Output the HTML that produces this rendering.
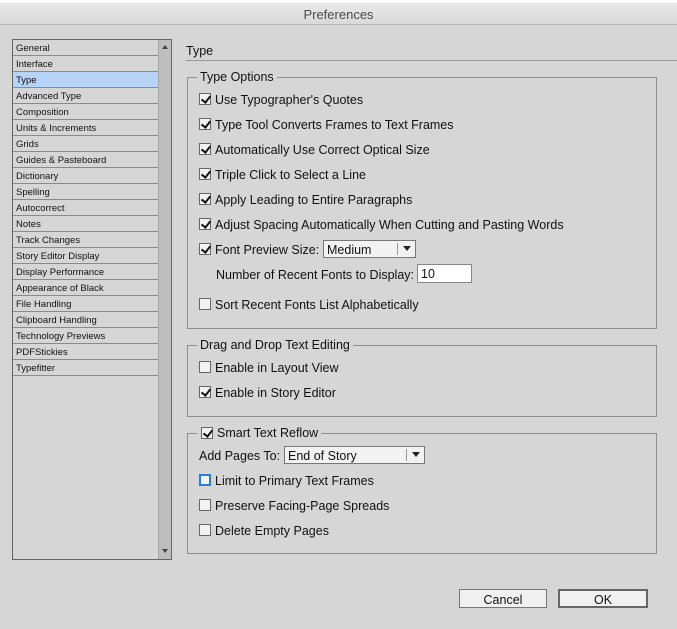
<!DOCTYPE html>
<html><head><style>
*{margin:0;padding:0;box-sizing:border-box}
body{width:677px;height:629px;background:#d6d6d6;font-family:"Liberation Sans",sans-serif;color:#111;position:relative;overflow:hidden}
.title{position:absolute;left:0;top:0;width:677px;height:25px;background:linear-gradient(#ececec,#d9d9d9);border-bottom:1px solid #b5b5b5;text-align:center;font-size:13px;line-height:29px;color:#4a4a4a}
.title:before{content:"";position:absolute;left:0;right:0;top:0;height:3px;background:#fff}
.list{position:absolute;left:12px;top:39px;width:160px;height:521px;border:1px solid #666;background:#d6d6d6}
.sb{position:absolute;right:0;top:0;width:13px;height:100%;background:#bdbdbd;border-left:1px solid #a8a8a8}
.item{position:absolute;left:0;width:145px;height:16px;border-bottom:1px solid #8a8a8a;font-size:9.5px;line-height:17px;padding-left:3px}
.sel{background:#b8d3f8}
.abs{position:absolute}
.t{font-size:12.5px;white-space:nowrap;padding-top:1px}
.grp{position:absolute;border:1px solid #8e8e8e}
.leg{position:absolute;background:#d6d6d6;padding:0 3px;font-size:12.5px;top:-8px;left:9px;line-height:15px}
.cb{position:absolute;width:12px;height:12px;border:1px solid #666;background:#f2f2f2}
.cb.c:after{content:"";position:absolute;left:3px;top:0px;width:4px;height:7px;border:solid #111;border-width:0 2px 2px 0;transform:rotate(38deg)}
.btn{position:absolute;height:19px;border:1px solid #777;background:#f0f0f0;font-size:12.5px;text-align:center;line-height:20px}
.dd{position:absolute;height:18px;border:1px solid #777;background:#f2f2f2;font-size:12.5px;line-height:18px;padding-left:3px}
.dd i{position:absolute;right:0;top:2px;width:18px;height:12px;border-left:1px solid #999}
.dd i:after{content:"";position:absolute;left:5px;top:3px;border:4px solid transparent;border-top:5px solid #222;border-bottom:0}
</style></head><body>
<div class="title">Preferences</div>
<div class="list">
<div class="sb"><div class="abs" style="left:3px;top:5px;border:3.5px solid transparent;border-bottom:4px solid #444;border-top:0"></div><div class="abs" style="left:3px;bottom:6px;border:3.5px solid transparent;border-top:4px solid #444;border-bottom:0"></div></div>
<div class="item" style="top:0">General</div>
<div class="item" style="top:16px">Interface</div>
<div class="item sel" style="top:32px">Type</div>
<div class="item" style="top:48px">Advanced Type</div>
<div class="item" style="top:64px">Composition</div>
<div class="item" style="top:80px">Units &amp; Increments</div>
<div class="item" style="top:96px">Grids</div>
<div class="item" style="top:112px">Guides &amp; Pasteboard</div>
<div class="item" style="top:128px">Dictionary</div>
<div class="item" style="top:144px">Spelling</div>
<div class="item" style="top:160px">Autocorrect</div>
<div class="item" style="top:176px">Notes</div>
<div class="item" style="top:192px">Track Changes</div>
<div class="item" style="top:208px">Story Editor Display</div>
<div class="item" style="top:224px">Display Performance</div>
<div class="item" style="top:240px">Appearance of Black</div>
<div class="item" style="top:256px">File Handling</div>
<div class="item" style="top:272px">Clipboard Handling</div>
<div class="item" style="top:288px">Technology Previews</div>
<div class="item" style="top:304px">PDFStickies</div>
<div class="item" style="top:320px">Typefitter</div>
</div>
<div class="abs t" style="left:186px;top:43px">Type</div>
<div class="abs" style="left:186px;top:60px;width:491px;height:1px;background:#999"></div>

<div class="grp" style="left:187px;top:77px;width:470px;height:252px"><div class="leg">Type Options</div></div>
<div class="cb c" style="left:199px;top:93px"></div><div class="abs t" style="left:215px;top:92px">Use Typographer's Quotes</div>
<div class="cb c" style="left:199px;top:118px"></div><div class="abs t" style="left:215px;top:117px">Type Tool Converts Frames to Text Frames</div>
<div class="cb c" style="left:199px;top:143px"></div><div class="abs t" style="left:215px;top:142px">Automatically Use Correct Optical Size</div>
<div class="cb c" style="left:199px;top:168px"></div><div class="abs t" style="left:215px;top:167px">Triple Click to Select a Line</div>
<div class="cb c" style="left:199px;top:193px"></div><div class="abs t" style="left:215px;top:192px">Apply Leading to Entire Paragraphs</div>
<div class="cb c" style="left:199px;top:218px"></div><div class="abs t" style="left:215px;top:217px">Adjust Spacing Automatically When Cutting and Pasting Words</div>
<div class="cb c" style="left:199px;top:243px"></div><div class="abs t" style="left:215px;top:242px">Font Preview Size:</div>
<div class="dd" style="left:323px;top:240px;width:93px">Medium<i></i></div>
<div class="abs t" style="left:216px;top:267px">Number of Recent Fonts to Display:</div>
<div class="abs" style="left:417px;top:264px;width:55px;height:19px;border:1px solid #888;background:#fff;font-size:12.5px;line-height:19px;padding-left:3px">10</div>
<div class="cb" style="left:199px;top:298px"></div><div class="abs t" style="left:215px;top:297px">Sort Recent Fonts List Alphabetically</div>

<div class="grp" style="left:187px;top:345px;width:470px;height:72px"><div class="leg">Drag and Drop Text Editing</div></div>
<div class="cb" style="left:199px;top:361px"></div><div class="abs t" style="left:215px;top:360px">Enable in Layout View</div>
<div class="cb c" style="left:199px;top:386px"></div><div class="abs t" style="left:215px;top:385px">Enable in Story Editor</div>

<div class="grp" style="left:187px;top:433px;width:470px;height:121px"><div class="leg" style="padding-left:20px">Smart Text Reflow</div></div>
<div class="cb c" style="left:201px;top:427px"></div>
<div class="abs t" style="left:199px;top:448px">Add Pages To:</div>
<div class="dd" style="left:284px;top:446px;width:141px">End of Story<i></i></div>
<div class="cb" style="left:199px;top:474px;border:2px solid #2a7fd4"></div><div class="abs t" style="left:215px;top:473px">Limit to Primary Text Frames</div>
<div class="cb" style="left:199px;top:499px"></div><div class="abs t" style="left:215px;top:498px">Preserve Facing-Page Spreads</div>
<div class="cb" style="left:199px;top:524px"></div><div class="abs t" style="left:215px;top:523px">Delete Empty Pages</div>

<div class="btn" style="left:459px;top:589px;width:88px">Cancel</div>
<div class="btn" style="left:558px;top:589px;width:90px;border:2px solid #666;line-height:18px">OK</div>
</body></html>
